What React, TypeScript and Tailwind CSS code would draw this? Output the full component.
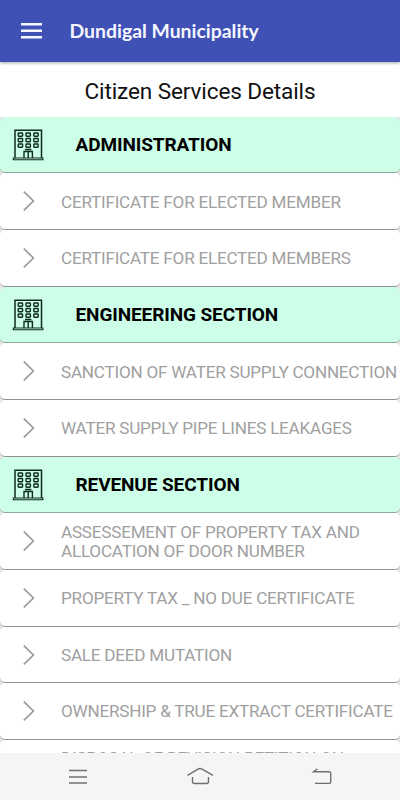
const sections = [
  {
    title: "ADMINISTRATION",
    items: ["CERTIFICATE FOR ELECTED MEMBER", "CERTIFICATE FOR ELECTED MEMBERS"],
  },
  {
    title: "ENGINEERING SECTION",
    items: [
      "SANCTION OF WATER SUPPLY CONNECTION",
      "WATER SUPPLY PIPE LINES LEAKAGES",
    ],
  },
  {
    title: "REVENUE SECTION",
    items: [
      "ASSESSEMENT OF PROPERTY TAX AND ALLOCATION OF DOOR NUMBER",
      "PROPERTY TAX _ NO DUE CERTIFICATE",
      "SALE DEED MUTATION",
      "OWNERSHIP & TRUE EXTRACT CERTIFICATE",
      "DISPOSAL OF REVISION PETITION ON PROPERTY TAX",
    ],
  },
];

function BuildingIcon() {
  return (
    <svg
      viewBox="0 0 32 32"
      className="ml-3 h-8 w-8 shrink-0"
      fill="none"
      stroke="#0f2a20"
      aria-hidden="true"
    >
      <path d="M3 29V1.2h26.5V29" strokeWidth="1.5" />
      <path d="M1.3 29h29.6v1.8H1.3z" strokeWidth="1.1" />
      {[4, 9.5, 15].map((y) =>
        [6.2, 14, 21.8].map((x) => (
          <rect key={`${x}-${y}`} x={x} y={y} width="4.4" height="3.2" rx="0.7" strokeWidth="1.4" />
        ))
      )}
      <path d="M12 29v-6.5h8.4V29M16.2 22.5V29M13 20.5h6.4" strokeWidth="1.4" />
    </svg>
  );
}

function ChevronIcon() {
  return (
    <svg viewBox="0 0 12 20" className="ml-[22.5px] h-5 w-3 shrink-0" fill="none" aria-hidden="true">
      <path d="M.8.6 10.4 10 .8 19.4" stroke="#989898" strokeWidth="1.6" />
    </svg>
  );
}

export default function App() {
  return (
    <div className="flex h-[800px] w-[400px] flex-col overflow-hidden bg-white font-['Roboto',sans-serif]">
      <header className="z-10 flex h-[62px] shrink-0 items-center bg-[#3f51b5] pl-[21px] shadow-[0_1px_3px_rgba(0,0,0,0.35)]">
        <svg viewBox="0 0 21 16" className="h-4 w-[21px]" aria-hidden="true">
          <path d="M0 1.3h21M0 7.8h21M0 14.3h21" stroke="#f5f6ff" strokeWidth="2.4" />
        </svg>
        <h1 className="ml-[27.5px] font-['Lato',sans-serif] text-[19.4px] font-bold text-[#f5f6ff]">
          Dundigal Municipality
        </h1>
      </header>

      <main className="min-h-0 flex-1 overflow-hidden">
        <h2 className="flex h-[54.8px] items-center justify-center pt-[5px] text-[22.6px] tracking-[-0.13px] text-[#111]">
          Citizen Services Details
        </h2>

        <div className="bg-[#e4e4e4]">
          {sections.map((section) => (
            <section key={section.title}>
              <div className="flex h-[56.67px] items-center rounded-[5px] border-b border-[#8fa79c] bg-[#ccfee8]">
                <BuildingIcon />
                <h3 className="ml-[31.5px] pt-[2px] text-[19px] font-bold tracking-[-0.1px] text-black">
                  {section.title}
                </h3>
              </div>
              {section.items.map((item) => (
                <div
                  key={item}
                  className="flex h-[56.67px] items-center rounded-[5px] border-b border-[#929292] bg-white"
                >
                  <ChevronIcon />
                  <p className="ml-[26.5px] flex-1 pt-[2px] text-[17.1px] leading-[19.5px] tracking-[-0.22px] text-[#a0a0a0]">
                    {item}
                  </p>
                </div>
              ))}
            </section>
          ))}
        </div>
      </main>

      <nav className="flex h-[47px] shrink-0 items-center bg-[#f5f5f5]">
        <svg
          viewBox="0 0 400 47"
          className="h-[47px] w-full"
          fill="none"
          stroke="#707070"
          strokeWidth="1.4"
          aria-hidden="true"
        >
          <path d="M69 17.5h18M69 24h18M69 30h18" />
          <path d="M187.5 22.3 197.5 16.3Q200 14.7 202.5 16.3L213 22.3" />
          <path d="M192.5 24v4.5q0 2 2 2h12q2 0 2-2V24" />
          <path d="M317.5 15.8 313.5 18.7H329q1.7 0 1.7 1.7v8.5q0 1.5-1.7 1.5h-14" />
        </svg>
      </nav>
    </div>
  );
}
